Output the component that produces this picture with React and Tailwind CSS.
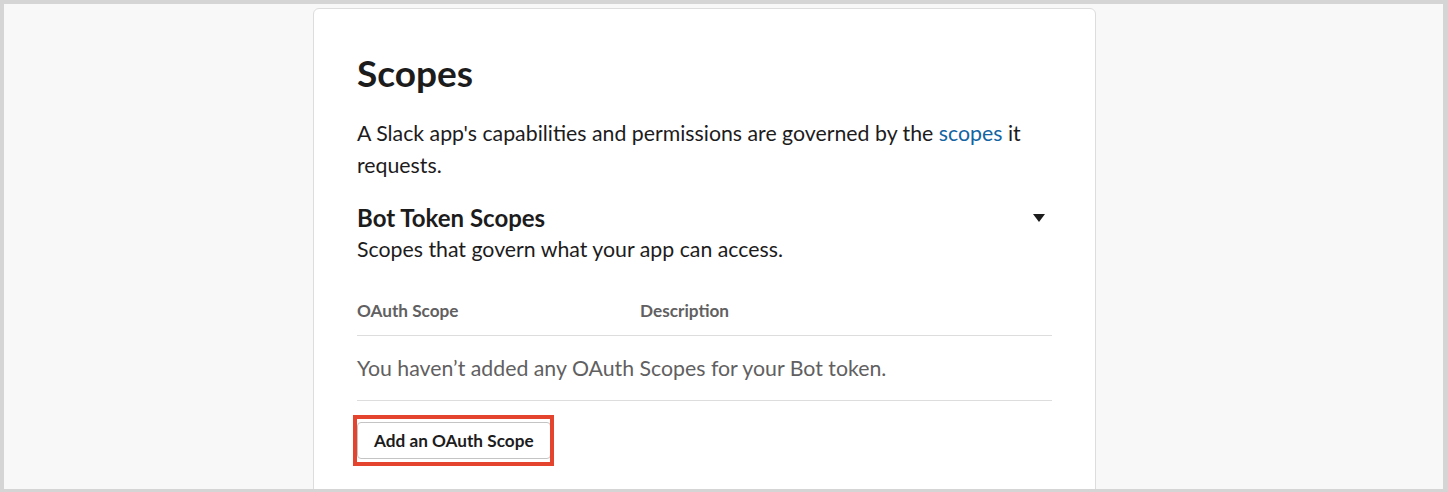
import React from "react";

export default function App() {
  return (
    <div className="h-[492px] w-[1448px] overflow-hidden bg-[#f8f8f8] border-[#d5d5d5] border-t-4 border-l-4 border-b-[3px] border-r-[5px] font-['Lato',sans-serif] text-[#1d1c1d]">
      <div className="ml-[309px] mt-1 w-[783px] h-[600px] bg-white border border-[#dddddd] rounded-[6px] px-[43px] pt-[42px]">
        <h1 className="text-[37px] leading-[44px] font-bold">Scopes</h1>
        <p className="mt-[22px] text-[21.3px] leading-[32px]">
          A Slack app's capabilities and permissions are governed by the{" "}
          <span className="text-[#1264a3]">scopes</span> it requests.
        </p>
        <div className="mt-[23px] flex items-center justify-between">
          <h2 className="text-[24px] leading-[28px] font-bold">Bot Token Scopes</h2>
          <svg width="12" height="8" viewBox="0 0 12 8" className="mr-[7px] mb-[1px]">
            <path d="M0 0 H12 L6 8 Z" fill="#1d1c1d" />
          </svg>
        </div>
        <p className="mt-[2px] text-[21.3px] leading-[31px]">Scopes that govern what your app can access.</p>
        <div className="mt-[36px] flex border-b border-[#dddddd] pb-[14px] text-[17.2px] leading-[20px] font-bold text-[#616061]">
          <div className="w-[283px]">OAuth Scope</div>
          <div>Description</div>
        </div>
        <div className="border-b border-[#dddddd] pt-[17px] pb-[16px] text-[21.3px] leading-[31px] text-[#616061]">
          You haven’t added any OAuth Scopes for your Bot token.
        </div>
        <div className="mt-[21px]">
          <button className="relative h-[37px] px-4 rounded-[4px] border border-[#c4c4c4] bg-white text-[17.2px] leading-[20px] font-bold text-[#1d1c1d]">
            Add an OAuth Scope
            <span className="absolute -left-[5px] -right-[4px] -top-[8px] -bottom-[8px] border-4 border-[#e4432d] pointer-events-none"></span>
          </button>
        </div>
      </div>
    </div>
  );
}
